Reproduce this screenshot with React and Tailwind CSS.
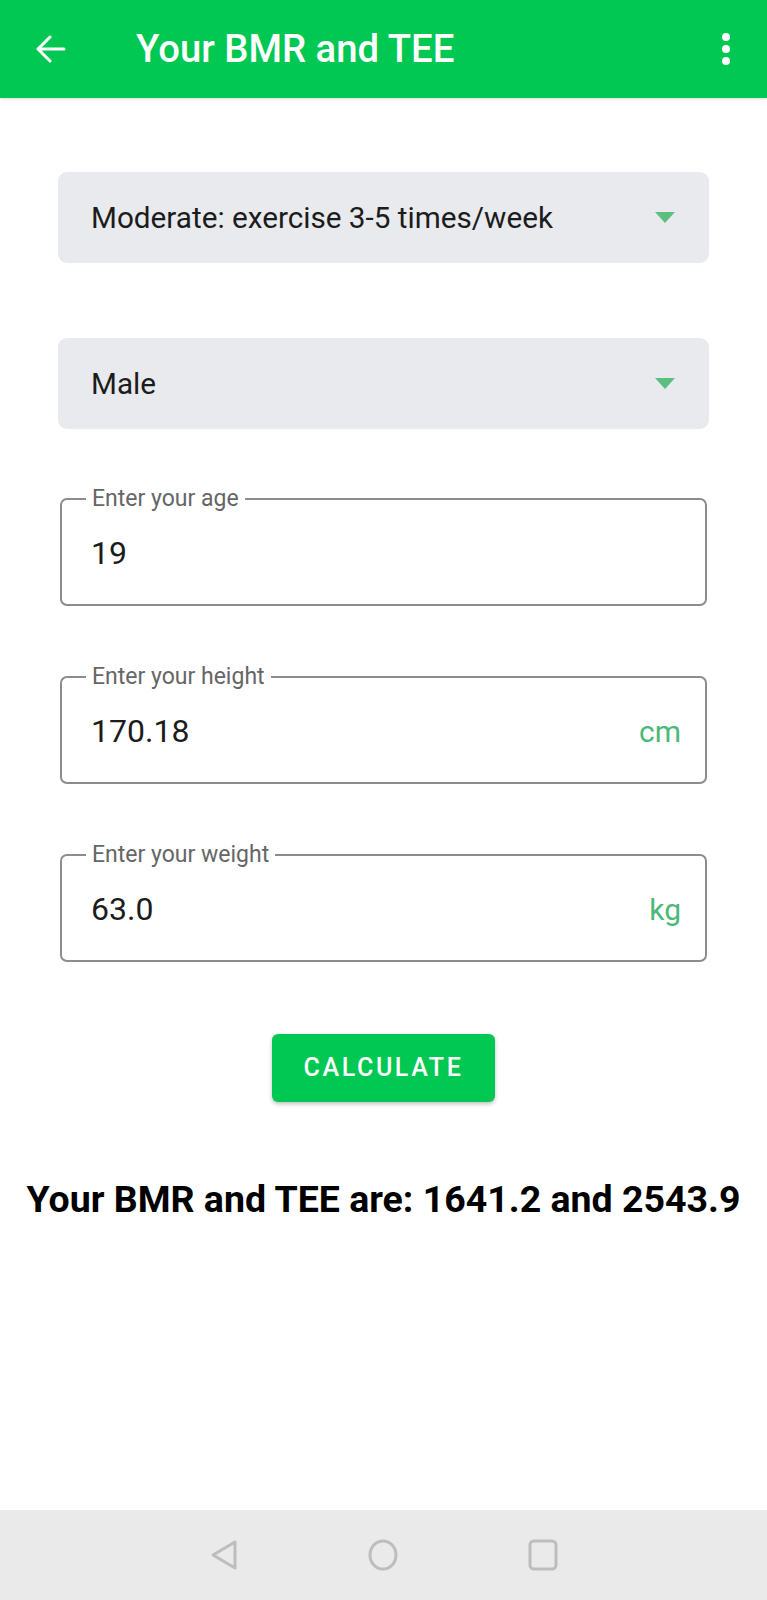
import React from 'react';

const font = { fontFamily: 'Roboto, "Noto Sans", sans-serif' };

const Spinner = ({ value }) => (
  <div className="flex items-center justify-between h-[91px] rounded-[9px] bg-[#e9eaee] pl-[33px] pr-[34px]">
    <span className="text-[29.7px] text-[#1c1c1c] translate-y-[1px]">{value}</span>
    <svg width="20" height="12" viewBox="0 0 20 12">
      <path d="M0 0 L20 0 L10 11 Z" fill="#5cbf80" />
    </svg>
  </div>
);

const OutlinedField = ({ label, value, unit }) => (
  <fieldset className="mx-[2px] border-2 border-[#8c8c8c] rounded-[7px] pl-[24px] pr-[24px]">
    <legend className="px-[6px] text-[23px] leading-[22px] text-[#666666]">{label}</legend>
    <div className="flex items-center justify-between h-[42px] mt-[22px] mb-[30px] pl-[5px]">
      <span className="text-[32px] text-[#1c1c1c]">{value}</span>
      {unit && <span className="text-[30px] text-[#4cb877]">{unit}</span>}
    </div>
  </fieldset>
);

export default function App() {
  return (
    <div className="flex flex-col h-[1600px] bg-white" style={font}>
      {/* toolbar */}
      <div className="flex items-center h-[98px] bg-[#00c853] shadow-[0_1px_3px_rgba(0,0,0,0.15)] pl-[36px] pr-[37px]">
        <svg width="30" height="28" viewBox="0 0 30 28" fill="none" stroke="white" strokeWidth="3" strokeLinecap="round" strokeLinejoin="round">
          <path d="M28 14 H3 M14 2 L2 14 L14 26" />
        </svg>
        <span className="ml-[70px] text-[38.3px] font-medium text-white">Your BMR and TEE</span>
        <div className="ml-auto flex flex-col gap-[4px]">
          <span className="w-[8px] h-[8px] rounded-full bg-white" />
          <span className="w-[8px] h-[8px] rounded-full bg-white" />
          <span className="w-[8px] h-[8px] rounded-full bg-white" />
        </div>
      </div>

      <div className="flex flex-col px-[58px] pt-[74px]">
        <Spinner value="Moderate: exercise 3-5 times/week" />
        <div className="mt-[75px]">
          <Spinner value="Male" />
        </div>
        <div className="mt-[59px]">
          <OutlinedField label="Enter your age" value="19" />
        </div>
        <div className="mt-[60px]">
          <OutlinedField label="Enter your height" value="170.18" unit="cm" />
        </div>
        <div className="mt-[60px]">
          <OutlinedField label="Enter your weight" value="63.0" unit="kg" />
        </div>
        <div className="flex justify-center mt-[72px]">
          <button className="w-[223px] h-[68px] rounded-[6px] bg-[#00c853] text-white text-[25px] font-medium tracking-[2.6px] shadow-[0_2px_4px_rgba(0,0,0,0.25)]">
            CALCULATE
          </button>
        </div>
      </div>

      <div className="mt-[69px] text-center text-[37.5px] font-bold text-black">
        Your BMR and TEE are: 1641.2 and 2543.9
      </div>

      {/* nav bar */}
      <div className="mt-auto flex items-center justify-center gap-[128px] h-[90px] bg-[#eaeaea]">
        <svg width="30" height="32" viewBox="0 0 30 32" fill="none" stroke="#bdbdbd" strokeWidth="3" strokeLinejoin="round">
          <path d="M26 3 L26 29 L4 16 Z" />
        </svg>
        <svg width="32" height="32" viewBox="0 0 32 32" fill="none" stroke="#bdbdbd" strokeWidth="3">
          <ellipse cx="16" cy="16" rx="13" ry="14" />
        </svg>
        <svg width="32" height="32" viewBox="0 0 32 32" fill="none" stroke="#bdbdbd" strokeWidth="3">
          <rect x="3" y="2" width="26" height="28" rx="4" />
        </svg>
      </div>
    </div>
  );
}
